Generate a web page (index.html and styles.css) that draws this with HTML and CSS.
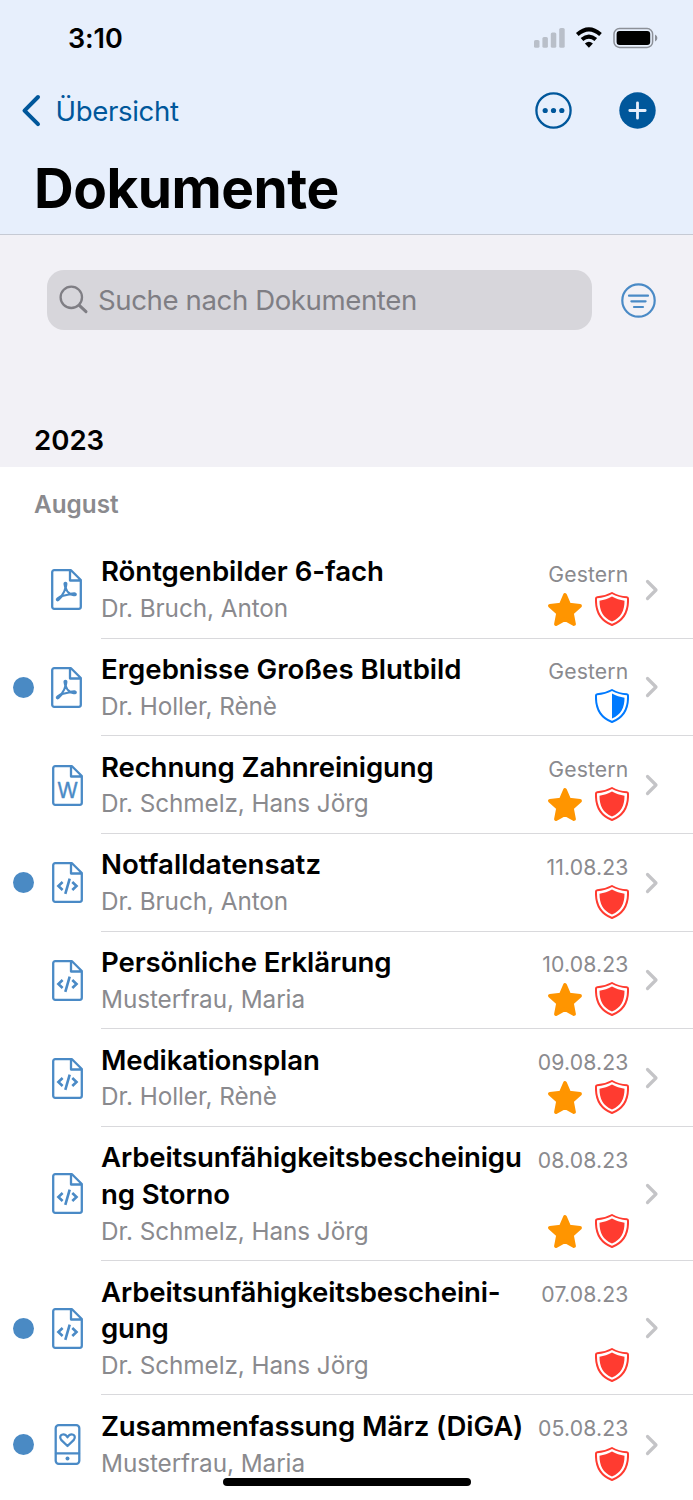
FILE: index.html
```html
<!DOCTYPE html>
<html lang="de">
<head>
<meta charset="utf-8">
<title>Dokumente</title>
<link rel="stylesheet" href="styles.css">
</head>
<body>
<svg class="defs" aria-hidden="true">
  <symbol id="sheet" viewBox="0 0 31 41"><path d="M3.500 1.200H20L29.800 11V37.800a2 2 0 0 1-2 2H3.200A2 2 0 0 1 1.200 37.800V3.200A2 2 0 0 1 3.200 1.200ZM19 1.500V11.500H29.500"/></symbol>
  <symbol id="pdf" viewBox="0 0 31 41"><use href="#sheet"/><path class="thin" d="M14.300 19L13.500 15.400C13 13.200 15.900 13.200 15.400 15.400L14.800 19C15.400 21.500 17 23.600 19.200 24.700L23.300 24.300C25.600 24.500 25.300 26.600 22.900 26.200L19 25.200L11.200 27L7.600 30.900C5.900 32 5 30.600 6.600 29.400L10.700 26.700C12.500 24.300 13.900 22 14.300 19Z"/></symbol>
  <symbol id="word" viewBox="0 0 31 41"><use href="#sheet"/><text x="15.500" y="32.700" text-anchor="middle">W</text></symbol>
  <symbol id="code" viewBox="0 0 31 41"><use href="#sheet"/><path class="mark" d="M10.600 20L6.400 24L10.600 28M20.300 20L24.500 24L20.300 28M17.700 16.600L13.300 31.800"/></symbol>
  <symbol id="phone" viewBox="0 0 31 41"><rect x="3.700" y="1.200" width="23.600" height="38.600" rx="3"/><path d="M4 29.300H27"/><path d="M15.500 22L9.400 16.200C7 13.300 8.400 10.300 11.300 10.300C13.300 10.300 14.500 11.500 15.500 13.200C16.500 11.500 17.700 10.300 19.700 10.300C22.600 10.300 24 13.300 21.600 16.200Z"/><circle class="solid" cx="15.500" cy="34.500" r="2"/></symbol>
  <symbol id="star" viewBox="0 0 34 33"><path d="M17 2L21.200 11.700L32 12.800L23.900 20.200L26 31L17 26L8 31L10.100 20.200L2 12.800L12.800 11.700Z"/></symbol>
  <symbol id="rim" viewBox="0 0 34 34"><path d="M17 1C12.500 3.500 7.500 5 2.200 5.300Q1 5.400 1 6.600C.5 20 5 28.500 17 33C29 28.500 33.500 20 33 6.600Q33 5.400 31.800 5.300C26.500 5 21.500 3.500 17 1Z"/></symbol>
  <symbol id="shield" viewBox="0 0 34 34"><use href="#rim"/><path class="core" d="M17 4.600C13 6.800 9 8.200 4.500 8.700C4.400 18.500 8 25.800 17 29.500C26 25.800 29.600 18.500 29.500 8.700C25 8.200 21 6.800 17 4.600Z"/></symbol>
  <symbol id="half" viewBox="0 0 34 34"><use href="#rim"/><path class="core" d="M17 4.600V29.500C26 25.800 29.600 18.500 29.500 8.700C25 8.200 21 6.800 17 4.600Z"/></symbol>
  <symbol id="next" viewBox="0 0 14 22"><path d="M2.500 2.500L11 11L2.500 19.500"/></symbol>
</svg>

<header class="header">
  <div class="status">
    <span class="time">3:10</span>
    <svg class="signals" viewBox="0 0 124 24">
      <g fill="#b9bfc9"><rect x="0" y="14" width="5.500" height="7.800" rx="1.600"/><rect x="8.400" y="11" width="5.500" height="10.800" rx="1.600"/><rect x="16.800" y="6.500" width="5.500" height="15.300" rx="1.600"/><rect x="25.200" y="2" width="5.500" height="19.800" rx="1.600"/></g>
      <g fill="none" stroke="#000" stroke-width="4"><path d="M43.300 8.600Q54.900-1.800 66.500 8.600"/><path d="M48 13.600Q54.900 7.600 61.800 13.600"/></g>
      <path d="M54.900 21.800L50.900 17.600Q54.900 14.100 58.900 17.600Z"/>
      <rect x="80" y="2.600" width="38.600" height="18.800" rx="5.500" fill="none" stroke="#8c9098" stroke-width="1.500"/>
      <rect x="82.600" y="5" width="33.600" height="14" rx="3"/>
      <path d="M121 8.500Q123.400 9.600 123.400 12T121 15.500Z" fill="#8c9098"/>
    </svg>
  </div>
  <nav class="nav">
    <svg class="back" viewBox="0 0 20 34"><path d="M17 3L3.500 16.700L17 30.200"/></svg>
    <span class="back-label">Übersicht</span>
    <svg class="round more" viewBox="0 0 37 37"><circle cx="18.500" cy="18.500" r="17.100"/><g class="dots"><circle cx="10.200" cy="18.500" r="2.600"/><circle cx="18.500" cy="18.500" r="2.600"/><circle cx="26.800" cy="18.500" r="2.600"/></g></svg>
    <svg class="round add" viewBox="0 0 37 37"><circle cx="18.500" cy="18.500" r="18.200"/><path d="M18.500 10.800V26.200M10.800 18.500H26.200"/></svg>
  </nav>
  <h1 class="heading">Dokumente</h1>
</header>

<section class="tools">
  <div class="search-row">
    <div class="search">
      <svg class="lens" viewBox="0 0 30 30"><circle cx="12.300" cy="12.300" r="10.700"/><path d="M20.300 20.300L27 26.700" stroke-width="3"/></svg>
      <span class="placeholder">Suche nach Dokumenten</span>
    </div>
    <svg class="filter" viewBox="0 0 35 35"><circle cx="17.500" cy="17.500" r="16.200"/><path d="M8 12.700H27M10.400 18.300H24.600M13 24H22"/></svg>
  </div>
  <h2 class="year">2023</h2>
</section>

<main>
  <h3 class="month">August</h3>
  <ul class="list">
    <li class="row"><span></span><svg class="file file-pdf"><use href="#pdf"/></svg>
      <div class="body"><div class="text"><b class="title t1">Röntgenbilder 6-fach</b><span class="sub">Dr. Bruch, Anton</span></div>
      <div class="side"><span class="date">Gestern</span><span class="badges"><svg class="star"><use href="#star"/></svg><svg class="shield"><use href="#shield"/></svg></span></div>
      <svg class="next"><use href="#next"/></svg></div></li>
    <li class="row"><i class="unread"></i><svg class="file file-pdf"><use href="#pdf"/></svg>
      <div class="body"><div class="text"><b class="title t2">Ergebnisse Großes Blutbild</b><span class="sub">Dr. Holler, Rènè</span></div>
      <div class="side"><span class="date">Gestern</span><span class="badges"><svg class="shield blue"><use href="#half"/></svg></span></div>
      <svg class="next"><use href="#next"/></svg></div></li>
    <li class="row"><span></span><svg class="file"><use href="#word"/></svg>
      <div class="body"><div class="text"><b class="title">Rechnung Zahnreinigung</b><span class="sub">Dr. Schmelz, Hans Jörg</span></div>
      <div class="side"><span class="date">Gestern</span><span class="badges"><svg class="star"><use href="#star"/></svg><svg class="shield"><use href="#shield"/></svg></span></div>
      <svg class="next"><use href="#next"/></svg></div></li>
    <li class="row"><i class="unread"></i><svg class="file"><use href="#code"/></svg>
      <div class="body"><div class="text"><b class="title t4">Notfalldatensatz</b><span class="sub">Dr. Bruch, Anton</span></div>
      <div class="side"><span class="date">11.08.23</span><span class="badges"><svg class="shield"><use href="#shield"/></svg></span></div>
      <svg class="next"><use href="#next"/></svg></div></li>
    <li class="row"><span></span><svg class="file"><use href="#code"/></svg>
      <div class="body"><div class="text"><b class="title">Persönliche Erklärung</b><span class="sub">Musterfrau, Maria</span></div>
      <div class="side"><span class="date">10.08.23</span><span class="badges"><svg class="star"><use href="#star"/></svg><svg class="shield"><use href="#shield"/></svg></span></div>
      <svg class="next"><use href="#next"/></svg></div></li>
    <li class="row"><span></span><svg class="file"><use href="#code"/></svg>
      <div class="body"><div class="text"><b class="title">Medikationsplan</b><span class="sub">Dr. Holler, Rènè</span></div>
      <div class="side"><span class="date">09.08.23</span><span class="badges"><svg class="star"><use href="#star"/></svg><svg class="shield"><use href="#shield"/></svg></span></div>
      <svg class="next"><use href="#next"/></svg></div></li>
    <li class="row tall"><span></span><svg class="file"><use href="#code"/></svg>
      <div class="body"><div class="text"><b class="title">Arbeitsunfähigkeitsbescheinigu<br>ng Storno</b><span class="sub">Dr. Schmelz, Hans Jörg</span></div>
      <div class="side"><span class="date">08.08.23</span><span class="badges"><svg class="star"><use href="#star"/></svg><svg class="shield"><use href="#shield"/></svg></span></div>
      <svg class="next"><use href="#next"/></svg></div></li>
    <li class="row tall"><i class="unread"></i><svg class="file"><use href="#code"/></svg>
      <div class="body"><div class="text"><b class="title">Arbeitsunfähigkeitsbescheini-<br>gung</b><span class="sub">Dr. Schmelz, Hans Jörg</span></div>
      <div class="side"><span class="date">07.08.23</span><span class="badges"><svg class="shield"><use href="#shield"/></svg></span></div>
      <svg class="next"><use href="#next"/></svg></div></li>
    <li class="row"><i class="unread"></i><svg class="file"><use href="#phone"/></svg>
      <div class="body"><div class="text"><b class="title">Zusammenfassung März (DiGA)</b><span class="sub">Musterfrau, Maria</span></div>
      <div class="side"><span class="date">05.08.23</span><span class="badges"><svg class="shield"><use href="#shield"/></svg></span></div>
      <svg class="next"><use href="#next"/></svg></div></li>
  </ul>
</main>
<div class="home-bar"></div>
</body>
</html>
```
FILE: styles.css
```css
* { box-sizing: border-box; }
html, body { margin: 0; height: 1500px; overflow: hidden; }
body { position: relative; width: 693px; background: #fff; color: #000; font-family: Inter, "Liberation Sans", sans-serif; }
svg { display: block; flex: none; }
h1, h2, h3, ul { margin: 0; padding: 0; }
.defs { display: none; }

.header { height: 235px; background: #e7effc; border-bottom: 1px solid #c6cad4; }
.status { height: 75px; display: flex; justify-content: space-between; padding: 0 35.500px 0 68px; }
.time { font-size: 27px; font-weight: 600; line-height: 78px; letter-spacing: -.1px; }
.signals { width: 124px; height: 24px; margin-top: 26px; }
.nav { height: 71px; display: flex; align-items: center; padding: 0 37.500px 0 20.500px; color: #00579b; }
.back { width: 20px; height: 34px; fill: none; stroke: currentColor; stroke-width: 4; stroke-linecap: round; stroke-linejoin: round; }
.back-label { flex: 1; margin-left: 15px; font-size: 27.600px; letter-spacing: -.35px; }
.round { width: 37px; height: 37px; }
.more { fill: none; stroke: #00579b; stroke-width: 2.300; margin-right: 46.500px; }
.dots { fill: #00579b; stroke: none; }
.add { fill: #00579b; }
.add path { stroke: #e7effc; stroke-width: 2.800; stroke-linecap: round; }
.heading { padding-left: 34px; font-size: 55px; line-height: 84px; font-weight: 700; letter-spacing: -.500px; }

.tools { height: 231.700px; background: #f2f1f6; padding: 34.500px 37px 0 47px; }
.search-row { display: flex; align-items: center; justify-content: space-between; }
.search { width: 545px; height: 60px; border-radius: 17px; background: #d7d6db; display: flex; align-items: center; padding-left: 12px; gap: 9px; }
.lens { width: 30px; height: 30px; margin-top: 1.500px; fill: none; stroke: #7f7e84; stroke-width: 2.300; stroke-linecap: round; }
.placeholder { font-size: 27.600px; color: #7f7e84; letter-spacing: -.4px; }
.filter { width: 35px; height: 35px; margin-top: 1px; fill: none; stroke: #4a8ac6; stroke-width: 2.200; stroke-linecap: round; }
.year { margin: 90px 0 0 -13px; font-size: 27.600px; line-height: 40px; font-weight: 600; }

.month { height: 74.300px; padding-left: 34px; font-size: 24.300px; line-height: 74px; font-weight: 600; color: #8a8a8e; }
.list { list-style: none; }
.row { height: 97.650px; display: grid; grid-template-columns: 38px 63px minmax(0, 1fr); align-items: center; }
.tall { height: 134.300px; }
.unread { width: 21px; height: 21px; margin: 0 0 0 13px; border-radius: 50%; background: #4a8ac4; }
.file { width: 31px; height: 41px; margin: 0 0 0 13.500px; fill: none; stroke: #4a8ac6; stroke-width: 2.300; stroke-linejoin: round; stroke-linecap: round; }
.file-pdf { margin-left: 12.500px; }
.thin { stroke-width: 2; }
.mark { stroke-width: 2.600; stroke-linecap: butt; stroke-linejoin: miter; }
.solid { fill: #4a8ac6; stroke: none; }
.file text, #word text { font: 400 21px Inter, sans-serif; fill: #4a8ac6; stroke: #4a8ac6; stroke-width: .4; }
.body { height: 100%; display: flex; border-bottom: 1px solid #d9d9dc; }
.row:last-child .body { border-bottom: 0; }
.text { flex: 1; min-width: 0; padding-top: 12.500px; white-space: nowrap; }
.title { display: block; font-size: 27.600px; line-height: 36.700px; font-weight: 600; letter-spacing: -.14px; }
.t1 { letter-spacing: -.05px; }
.t2 { letter-spacing: 0; }
.t4 { letter-spacing: .05px; }
.sub { display: block; font-size: 24.300px; line-height: 36.700px; color: #8a8a8e; letter-spacing: -.07px; }
.side { flex: none; width: 110px; display: flex; flex-direction: column; justify-content: space-between; align-items: flex-end; padding: 20.800px 0 12px; }
.date { font-size: 21.200px; line-height: 24px; color: #8a8a8e; letter-spacing: .15px; }
.badges { display: flex; align-items: flex-end; gap: 13px; }
.star { width: 34px; height: 33px; fill: #ff9500; stroke: #ff9500; stroke-width: 3.800; stroke-linejoin: round; }
.shield { width: 34px; height: 34px; color: #ff3b30; fill: none; stroke: currentColor; stroke-width: 2; }
.core { fill: currentColor; stroke: none; }
.blue { color: #007aff; }
.next { width: 14px; height: 22px; margin: 1px 34px 0 16.500px; align-self: center; fill: none; stroke: #c4c4c7; stroke-width: 3.200; stroke-linecap: round; stroke-linejoin: round; }
.home-bar { position: absolute; left: 222.500px; top: 1477.800px; width: 248px; height: 8.600px; border-radius: 5px; background: #000; }
```
